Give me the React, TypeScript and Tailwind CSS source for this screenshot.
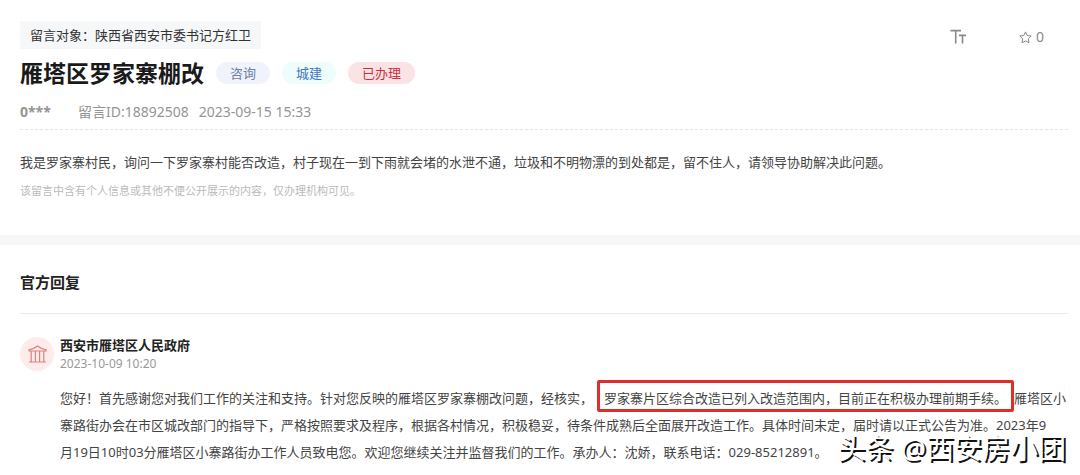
interface Tag {
  label: string;
  className: string;
}

const tags: Tag[] = [
  { label: '咨询', className: 'bg-[#f0f3f9] text-[#6b7fa9]' },
  { label: '城建', className: 'bg-[#eefcfb] text-[#3d78c0]' },
  { label: '已办理', className: 'bg-[#fae3e5] text-[#c9303e]' },
];

function FontSizeIcon() {
  return (
    <svg width="17" height="16" viewBox="0 0 17 16" fill="none" stroke="currentColor" strokeWidth="1.6">
      <path d="M0.5 1.6H11M5.7 1.6V14.6M9 6.4H16M12.5 6.4V14.6" />
    </svg>
  );
}

function StarIcon() {
  return (
    <svg width="13" height="13" viewBox="0 0 13 13" fill="none" stroke="currentColor" strokeLinejoin="round">
      <path d="M6.5 0.9L8.2 4.5L12.2 5L9.3 7.8L10 11.8L6.5 9.9L3 11.8L3.7 7.8L0.8 5L4.8 4.5Z" />
    </svg>
  );
}

function GovernmentIcon() {
  return (
    <svg width="19" height="19" viewBox="0 0 19 19" fill="none" stroke="currentColor" strokeWidth="1.2">
      <path d="M1 6V4.8C4 4.4 7 3 9.5 1C12 3 15 4.4 18 4.8V6H1Z" />
      <path d="M3.2 6V16.4M7.4 6V16.4M11.6 6V16.4M15.8 6V16.4M1 17H18" />
    </svg>
  );
}

function MessageHeader() {
  return (
    <header className="border-b border-dashed border-[#e4e4e4] pb-[7px]">
      <div className="flex items-center justify-between pr-6">
        <p className="bg-[#f6f7f9] px-[10px] leading-7 text-[#333]">留言对象：陕西省西安市委书记方红卫</p>
        <div className="mt-1 flex items-center gap-[52px] text-[#888]">
          <button type="button" aria-label="字体大小">
            <FontSizeIcon />
          </button>
          <button type="button" aria-label="收藏" className="flex items-center gap-1 text-sm">
            <StarIcon />
            <span>0</span>
          </button>
        </div>
      </div>
      <div className="mt-2 flex items-center gap-3">
        <h1 className="text-[23px] leading-8 font-bold text-[#1a1a1a]">雁塔区罗家寨棚改</h1>
        {tags.map((tag) => (
          <span key={tag.label} className={`rounded-full px-[14px] leading-[22px] ${tag.className}`}>
            {tag.label}
          </span>
        ))}
      </div>
      <div className="mt-[13px] flex text-sm leading-5 text-[#959595]">
        <span className="w-[58px] font-bold">0***</span>
        <span>留言ID:18892508</span>
        <time className="ml-[10px]">2023-09-15 15:33</time>
      </div>
    </header>
  );
}

export default function App() {
  return (
    <main className="relative bg-white font-['Noto_Sans','Noto_Sans_CJK_SC',sans-serif] text-[13px] text-[#444]">
      <article className="pt-[21px] pr-3 pb-9 pl-5">
        <MessageHeader />
        <p className="mt-5 leading-6">
          我是罗家寨村民，询问一下罗家寨村能否改造，村子现在一到下雨就会堵的水泄不通，垃圾和不明物漂的到处都是，留不住人，请领导协助解决此问题。
        </p>
        <p className="mt-[9px] text-[11px] leading-4 text-[#bbb]">
          该留言中含有个人信息或其他不便公开展示的内容，仅办理机构可见。
        </p>
      </article>

      <div className="h-[10px] bg-[#f7f7f7]" />

      <section className="pr-3 pl-5">
        <h2 className="border-b border-[#ebebeb] pt-[25px] pb-[19px] text-[15px] leading-6 font-bold text-[#222]">
          官方回复
        </h2>
        <div className="mt-[21px] flex items-start gap-[6px]">
          <div className="mt-[2px] flex size-[34px] shrink-0 items-center justify-center rounded-full bg-[#fdeceb] text-[#dc7f7d]">
            <GovernmentIcon />
          </div>
          <div>
            <h3 className="leading-5 font-bold text-[#222]">西安市雁塔区人民政府</h3>
            <time className="block text-xs leading-[18px] text-[#999]">2023-10-09 10:20</time>
          </div>
        </div>
        <p className="mt-3 pl-10 leading-[27px]">
          您好！首先感谢您对我们工作的关注和支持。针对您反映的雁塔区罗家寨棚改问题，经核实，
          <span className="ml-1 rounded-xs border-3 border-[#df2f2b] px-1 pt-1.5 pb-0.5">
            罗家寨片区综合改造已列入改造范围内，目前正在积极办理前期手续。
          </span>
          雁塔区小寨路街办会在市区城改部门的指导下，严格按照要求及程序，根据各村情况，积极稳妥，待条件成熟后全面展开改造工作。具体时间未定，届时请以正式公告为准。2023年9
          <br />
          月19日10时03分雁塔区小寨路街办工作人员致电您。欢迎您继续关注并监督我们的工作。承办人：沈娇，联系电话：029-85212891。
        </p>
      </section>

      <div className="absolute right-[14px] bottom-0 text-[28px] leading-9 text-white [text-shadow:2px_2px_0_#111]">
        头条 @西安房小团
      </div>
    </main>
  );
}
